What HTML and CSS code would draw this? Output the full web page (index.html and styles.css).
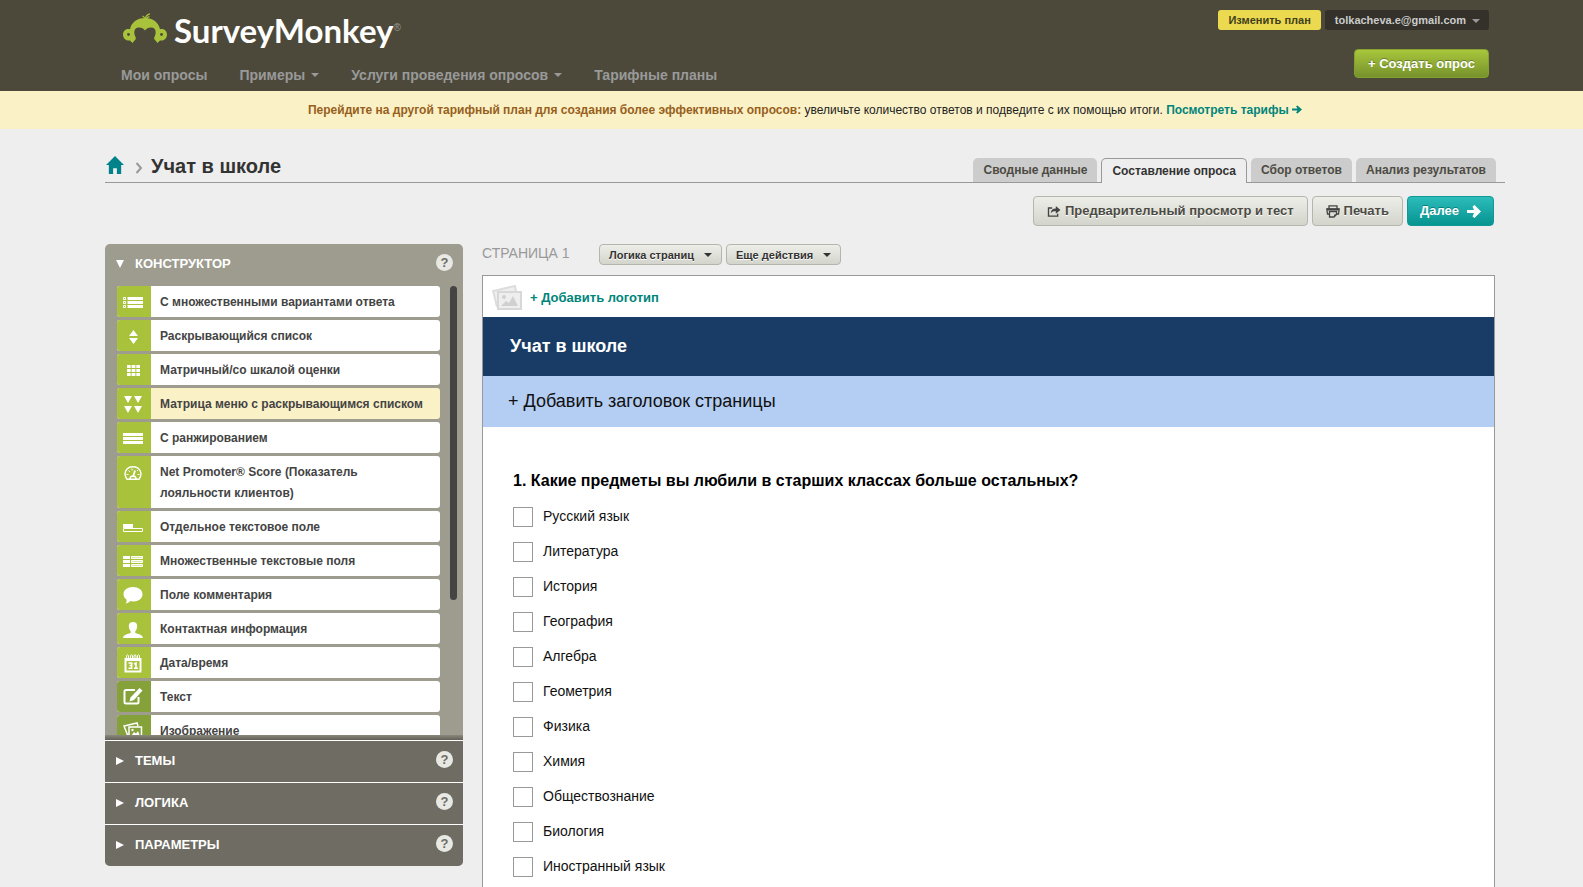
FILE: index.html
```html
<!DOCTYPE html>
<html lang="ru">
<head>
<meta charset="utf-8">
<title>Учат в школе</title>
<link rel="stylesheet" href="styles.css">
</head>
<body>
<header class="header">
  <div class="header-left">
    <a class="logo" href="#">
      <svg class="monkey" viewBox="0 0 44 31" width="44" height="31" aria-hidden="true">
        <path fill="#a8c23c" d="M22 5C14 5 8.500 9.500 7 16.200C3.500 15.500 0 17.500 0 21.500C0 25.500 3 28 7 27.500L9.500 30L11.500 27.500C12.800 26.500 13.200 25.500 12.500 24C10.300 19.500 11 15 15.500 14.500C18.500 14.300 20.500 15.500 22 17.500C23.500 15.500 25.500 14.300 28.500 14.500C33 15 33.700 19.500 31.500 24C30.800 25.500 31.200 26.500 32.500 27.500L34.500 30L37 27.500C41 28 44 25.500 44 21.500C44 17.500 40.500 15.500 37 16.200C35.500 9.500 30 5 22 5Z"/>
        <path fill="none" stroke="#a8c23c" stroke-width="1.200" d="M22 6C21.500 4.500 20.500 3.500 19.500 3M22.500 6C22.500 3.500 24 1.500 27 .8M23.500 6C24 4.500 25 3.800 26.500 3.700"/>
        <circle cx="5.500" cy="21.500" r="1.400" fill="#4c493b"/><circle cx="38.500" cy="21.500" r="1.400" fill="#4c493b"/>
      </svg>
      <span class="logo-text">SurveyMonkey</span><span class="reg">®</span>
    </a>
    <nav class="nav">
      <a href="#">Мои опросы</a>
      <a href="#">Примеры<i class="caret"></i></a>
      <a href="#">Услуги проведения опросов<i class="caret"></i></a>
      <a href="#">Тарифные планы</a>
    </nav>
  </div>
  <div class="header-right">
    <div class="account">
      <button class="plan">Изменить план</button>
      <button class="user">tolkacheva.e@gmail.com<i class="caret"></i></button>
    </div>
    <button class="create">+ Создать опрос</button>
  </div>
</header>
<div class="banner"><b>Перейдите на другой тарифный план для создания более эффективных опросов:</b> увеличьте количество ответов и подведите с их помощью итоги. <a href="#">Посмотреть тарифы
  <svg width="10" height="9" viewBox="0 0 11 9"><path fill="#00857b" d="M0 3.500H6L4.500 1L6 0L11 4.500L6 9L4.500 8L6 5.500H0Z"/></svg></a></div>

<div class="page">
  <div class="titlebar">
    <a class="home" href="#" aria-label="Главная"><svg width="18" height="18" viewBox="0 0 19 19"><path fill="#00828a" d="M9.500 0L19 9.500H16V19H11.500V13H7.500V19H3V9.500H0Z"/></svg></a>
    <svg class="chev" width="8" height="12" viewBox="0 0 8 12"><path fill="none" stroke="#999" stroke-width="2" d="M1.500 1L6 6L1.500 11"/></svg>
    <h1>Учат в школе</h1>
    <nav class="tabs">
      <a href="#">Сводные данные</a>
      <a class="active" href="#">Составление опроса</a>
      <a href="#">Сбор ответов</a>
      <a href="#">Анализ результатов</a>
    </nav>
  </div>
  <div class="actions">
    <button class="btn preview"><svg width="14" height="11" viewBox="0 0 14 12"><path fill="none" stroke="#444" stroke-width="1.500" d="M5 2.200H1V11H11V8.500"/><path fill="#444" d="M3.500 8C3.500 4.500 5.500 2.700 9 2.700V0L14 4.300L9 8.500V5.800C6.500 5.600 5 6 3.500 8Z"/></svg>Предварительный просмотр и тест</button>
    <button class="btn print"><svg width="14" height="13" viewBox="0 0 14 13"><path fill="none" stroke="#444" stroke-width="1.300" d="M3 3.500V.8H11V3.500M3 9H1.500L.8 4H13.200L12.500 9H11M3.500 6.500H10.500V9.500L8 12H3.500Z"/><path fill="#444" d="M1 3.500H13V5.500H1ZM8 9.500H10.500L8 12Z"/></svg>Печать</button>
    <button class="btn next">Далее<svg width="14" height="13" viewBox="0 0 14 13"><path fill="#fff" d="M0 5H7L5.500 1.500L7.500 0L14 6.500L7.500 13L5.500 11.500L7 8H0Z"/></svg></button>
  </div>

  <div class="columns">
    <aside class="sidebar">
      <div class="panel-head"><span class="tri down"></span><h2>КОНСТРУКТОР</h2><button class="help" aria-label="Справка">?</button></div>
      <div class="builder">
        <ul class="types">
          <li><span class="ic"><svg width="20" height="11" viewBox="0 0 20 11"><path fill="#fff" d="M4.500 0H20V3H4.500ZM4.500 4H20V7H4.500ZM4.500 8H20V11H4.500Z"/><path fill="none" stroke="#fff" d="M.5 .5H2.500V2.500H.5ZM.5 4.500H2.500V6.500H.5ZM.5 8.500H2.500V10.500H.5Z"/></svg></span><span>С множественными вариантами ответа</span></li>
          <li><span class="ic"><svg width="9" height="14" viewBox="0 0 9 14"><path fill="#fff" d="M4.500 0L9 6H0ZM0 8H9L4.500 14Z"/></svg></span><span>Раскрывающийся список</span></li>
          <li><span class="ic"><svg width="13" height="11" viewBox="0 0 13 11"><path fill="#fff" d="M0 0H3.700V3H0ZM4.600 0H8.400V3H4.600ZM9.300 0H13V3H9.300ZM0 4H3.700V7H0ZM4.600 4H8.400V7H4.600ZM9.300 4H13V7H9.300ZM0 8H3.700V11H0ZM4.600 8H8.400V11H4.600ZM9.300 8H13V11H9.300Z"/></svg></span><span>Матричный/со шкалой оценки</span></li>
          <li class="picked"><span class="ic"><svg width="18" height="17" viewBox="0 0 18 17"><path fill="#fff" d="M0 0H8L4 7ZM10 0H18L14 7ZM0 10H8L4 17ZM10 10H18L14 17Z"/></svg></span><span>Матрица меню с раскрывающимся списком</span></li>
          <li><span class="ic"><svg width="20" height="11" viewBox="0 0 20 11"><path fill="#fff" d="M0 0H20V3H0ZM0 4H20V7H0ZM0 8H20V11H0Z"/></svg></span><span>С ранжированием</span></li>
          <li><span class="ic"><svg width="18" height="14" viewBox="0 0 18 14"><path fill="none" stroke="#fff" stroke-width="1.400" d="M3 13.300C-1 8 1.500 .7 9 .7C16.500 .7 19 8 15 13.300ZM6 13C6 10.500 7.500 10 9 10C10.500 10 12 10.500 12 13"/><path stroke="#fff" stroke-width="1.800" d="M9 11L11 4.500"/><path stroke="#fff" d="M2.500 8.500H4.500M4.500 4.500L6 6M8 2.500V4.500M13.500 8.500H15.500M13 5L14 4"/></svg></span><span>Net Promoter® Score (Показатель лояльности клиентов)</span></li>
          <li><span class="ic"><svg width="20" height="8" viewBox="0 0 20 8"><path fill="#fff" d="M0 0H10V4H0Z"/><path fill="none" stroke="#fff" d="M.5 4.500H19.500V7.500H.5Z"/></svg></span><span>Отдельное текстовое поле</span></li>
          <li><span class="ic"><svg width="20" height="11" viewBox="0 0 20 11"><path fill="#fff" d="M0 0H7V3H0ZM0 4H7V7H0ZM0 8H7V11H0Z"/><path fill="#dce7b0" stroke="#fff" d="M8.500 .5H19.500V2.500H8.500ZM8.500 4.500H19.500V6.500H8.500ZM8.500 8.500H19.500V10.500H8.500Z"/></svg></span><span>Множественные текстовые поля</span></li>
          <li><span class="ic"><svg width="20" height="17" viewBox="0 0 20 17"><path fill="#fff" d="M10 0C15.500 0 19.500 3 19.500 7.300C19.500 11.500 15.500 14.500 10.500 14.500C9 14.500 8.300 14.400 7.300 14.100C6 15.800 4.300 16.500 2.500 16.600C3.500 15.500 3.800 14 3.500 12.500C1.700 11.200 .5 9.500 .5 7.300C.5 3 4.500 0 10 0Z"/></svg></span><span>Поле комментария</span></li>
          <li><span class="ic"><svg width="20" height="16" viewBox="0 0 20 16"><path fill="#fff" d="M10 0C13 0 14.500 2 14.200 4.500C14 7 13 8.500 12.300 9.300V11C14.500 12 19.500 12 20 16H0C.5 12 5.500 12 7.700 11V9.300C7 8.500 6 7 5.800 4.500C5.500 2 7 0 10 0Z"/></svg></span><span>Контактная информация</span></li>
          <li><span class="ic"><svg width="18" height="19" viewBox="0 0 18 19"><path fill="#fff" d="M.5 4H17.500V18.500H.5Z"/><path fill="none" stroke="#fff" d="M2.500 5V1.500Q3.500 0 4.500 1.500V4M6.500 5V1.500Q7.500 0 8.500 1.500V4M10 5V1.500Q11 0 12 1.500V4M13.500 5V1.500Q14.500 0 15.500 1.500V4"/><path fill="#a8c23c" d="M2.500 7H15.500V16.500H2.500Z"/><path fill="none" stroke="#fff" stroke-width="1.600" d="M4.500 9H7.700V14.200H4.500M5.500 11.500H7.700M10 10L12 9V14.500M10 14.300H14"/></svg></span><span>Дата/время</span></li>
          <li class="dark"><span class="ic"><svg width="20" height="17" viewBox="0 0 20 17"><path fill="none" stroke="#fff" stroke-width="2" d="M12 2H3Q1.500 2 1.500 3.500V14Q1.500 15.500 3 15.500H14Q15.500 15.500 15.500 14V9"/><path fill="#fff" d="M16.500 0L19.500 2.500L11 12L6.500 13.500L7.500 9.500Z"/></svg></span><span>Текст</span></li>
          <li class="dark"><span class="ic"><svg width="20" height="17" viewBox="0 0 20 17"><path fill="none" stroke="#fff" stroke-width="1.500" d="M5 14L1 4L14 1L15 4M6 5H18.500V16H6Z"/><path fill="#fff" d="M8 14L11 10L13 11.500L15 9L17 14Z"/><circle cx="9.500" cy="8" r="1.200" fill="#fff"/></svg></span><span>Изображение</span></li>
        </ul>
        <div class="scroll"></div>
      </div>
      <div class="shade"></div>
      <div class="panel-row"><span class="tri"></span><h2>ТЕМЫ</h2><button class="help" aria-label="Справка">?</button></div>
      <div class="panel-row"><span class="tri"></span><h2>ЛОГИКА</h2><button class="help" aria-label="Справка">?</button></div>
      <div class="panel-row"><span class="tri"></span><h2>ПАРАМЕТРЫ</h2><button class="help" aria-label="Справка">?</button></div>
    </aside>

    <main class="main">
      <div class="page-tools">
        <span class="page-no">СТРАНИЦА 1</span>
        <button class="btn small">Логика страниц<i class="caret"></i></button>
        <button class="btn small">Еще действия<i class="caret"></i></button>
      </div>
      <section class="survey">
        <a class="add-logo" href="#">
          <svg width="30" height="25" viewBox="0 0 30 25"><path fill="#eee" stroke="#ddd" stroke-width="2" d="M5 22L1 6L23 1L24 6"/><path fill="#eee" stroke="#d8d8d8" stroke-width="2" d="M6 7H29V24H6Z"/><path fill="#d0d0d0" d="M9 21L14 16L17 18L21 11L26 21Z"/><circle cx="12" cy="12" r="2" fill="#d0d0d0"/></svg>
          + Добавить логотип</a>
        <h2 class="survey-title">Учат в школе</h2>
        <button class="add-heading">+ Добавить заголовок страницы</button>
        <fieldset class="question">
          <legend>1. Какие предметы вы любили в старших классах больше остальных?</legend>
          <label><input type="checkbox">Русский язык</label>
          <label><input type="checkbox">Литература</label>
          <label><input type="checkbox">История</label>
          <label><input type="checkbox">География</label>
          <label><input type="checkbox">Алгебра</label>
          <label><input type="checkbox">Геометрия</label>
          <label><input type="checkbox">Физика</label>
          <label><input type="checkbox">Химия</label>
          <label><input type="checkbox">Обществознание</label>
          <label><input type="checkbox">Биология</label>
          <label><input type="checkbox">Иностранный язык</label>
        </fieldset>
      </section>
    </main>
  </div>
</div>
</body>
</html>
```
FILE: styles.css
```css
* { box-sizing: border-box; }
body { margin: 0; height: 100vh; overflow: hidden; display: flex; flex-direction: column; background: #eee; color: #333; font: 12px/20px "Liberation Sans", Arial, sans-serif; }
a { text-decoration: none; color: #00857b; }
h1, h2 { margin: 0; }
button { font: inherit; font-weight: bold; border: 0; padding: 0; cursor: pointer; white-space: nowrap; }
svg { flex: none; }
.caret { display: inline-block; border: 4px solid transparent; border-top-color: currentColor; border-bottom: 0; vertical-align: middle; margin-left: 6px; }

.header { flex: none; display: flex; justify-content: space-between; height: 91px; padding: 0 94px 0 121px; background: #4c493b; }
.logo { display: flex; height: 50px; margin-top: 13px; padding-left: 2px; color: #fff; }
.logo-text { margin-left: 7px; font: bold 33px/34px Lato, sans-serif; }
.reg { font-size: 10px; line-height: 30px; color: #999; }
.nav { display: flex; gap: 32px; margin-top: 2px; font-size: 14px; font-weight: bold; white-space: nowrap; }
.nav a { color: #999; }
.nav .caret { margin-bottom: 3px; }
.header-right { display: flex; flex-direction: column; align-items: flex-end; padding-top: 10px; }
.account { display: flex; gap: 4px; font-size: 11px; }
.plan { height: 20px; padding: 0 10px; border-radius: 3px; background: #ebd94f; color: #40401c; }
.user { height: 20px; padding: 0 9px 0 10px; border-radius: 3px; background: #333129; color: #ccc; }
.user .caret { color: #999; }
.create { height: 29px; margin-top: 19px; padding: 0 13px; border: 1px solid #84a02f; border-radius: 4px; background: linear-gradient(#a9c63c, #76922c); color: #fff; font-size: 13px; text-shadow: 0 -1px #687f29; }

.banner { flex: none; height: 38px; padding: 9px 0 9px 27px; background: #fbf1c7; text-align: center; color: #222; white-space: nowrap; }
.banner b { color: #96601c; }
.banner a { font-weight: bold; }

.page { flex: 1; min-height: 0; display: flex; flex-direction: column; padding: 24px 78px 0 105px; }
.titlebar { flex: none; display: flex; height: 30px; border-bottom: 1px solid #999; }
.home { padding: 3px 1px 0; }
.chev { margin: 9px 8px 0 10px; }
h1 { font-size: 20px; line-height: 26px; }
.tabs { display: flex; align-items: flex-end; gap: 4px; margin-left: auto; padding-right: 9px; font-weight: bold; }
.tabs a { height: 24px; padding: 2px 10px; border-radius: 5px 5px 0 0; background: #ccc; color: #4c4b43; }
.tabs .active { height: 25px; margin-bottom: -1px; border: 1px solid #999; border-bottom: 0; background: #eee; color: #333; }
.actions { flex: none; display: flex; justify-content: flex-end; gap: 4px; margin-top: 13px; padding-right: 11px; }
.btn { display: flex; align-items: center; justify-content: center; gap: 4px; height: 30px; padding: 0 13px; border: 1px solid #b5b5ae; border-radius: 4px; background: linear-gradient(#edeee8, #d3d4cb); color: #4c4b43; font-size: 13px; text-shadow: 0 1px #fff; }
.next { gap: 8px; padding: 0 12px; border-color: #109a96; background: linear-gradient(#2cbcba, #069490); color: #fff; text-shadow: 0 -1px #08807d; }

.columns { flex: 1; min-height: 0; display: flex; align-items: stretch; gap: 19px; margin-top: 18px; }
.sidebar { width: 358px; flex: none; align-self: flex-start; border-radius: 5px; overflow: hidden; background: #9e9b8f; color: #fff; }
.sidebar h2 { font-size: 13px; line-height: 20px; }
.panel-head, .panel-row { display: flex; align-items: center; padding: 0 10px 2px 11px; }
.panel-head { height: 42px; }
.panel-row { height: 42px; border-top: 1px solid #fff; background: #6f6d63; }
.tri { width: 8px; margin-right: 11px; border: 4px solid transparent; border-left: 8px solid #fff; border-right: 0; }
.tri.down { border: 4px solid transparent; border-top: 8px solid #fff; border-bottom: 0; }
.help { width: 17px; height: 17px; margin: 0 0 3px auto; border-radius: 50%; background: #e8e8e4; color: #6f6d63; font-size: 13px; line-height: 17px; }
.builder { display: flex; height: 449px; overflow: hidden; padding: 0 6px 0 12px; }
.types { flex: 1; margin: 0; padding: 0; list-style: none; }
.types li { display: flex; min-height: 31px; margin-bottom: 3px; border-radius: 3px; overflow: hidden; background: #fff; color: #444; font-weight: bold; line-height: 21px; }
.types li > span:last-child { padding: 6px 9px 4px; }
.types .ic { flex: none; display: flex; justify-content: center; align-items: center; width: 34px; padding: 2px 2px 0 0; background: #a8c23c; }
.types li:nth-child(6) .ic { align-items: flex-start; padding-top: 10px; }
.types .dark .ic { padding-top: 0; background: #84a13a; }
.types .picked { background: #fbf1c7; }
.scroll { width: 7px; height: 314px; margin-left: 10px; border-radius: 4px; background: #444; }
.shade { height: 5px; background: linear-gradient(#8b887d, #626056); }

.main { flex: 1; min-width: 0; margin-right: 10px; display: flex; flex-direction: column; }
.page-tools { flex: none; display: flex; gap: 4px; height: 31px; }
.page-no { width: 113px; color: #999; font-size: 14px; line-height: 18px; }
.small { height: 21px; padding: 0 9px; font-size: 11px; gap: 4px; color: #333; }
.small .caret { border-width: 4px; border-bottom: 0; }
.survey { flex: 1; min-height: 0; display: flex; flex-direction: column; border: 1px solid #999; border-bottom: 0; background: #fff; }
.add-logo { flex: none; display: flex; align-items: center; gap: 8px; height: 41px; padding: 2px 9px 0; font-size: 13px; font-weight: bold; }
.survey-title { flex: none; padding: 14px 27px; background: #193c66; color: #fff; font-size: 18px; line-height: 31px; }
.add-heading { flex: none; height: 51px; padding: 0 25px 2px; background: #b3cdf3; color: #111; font-size: 18px; font-weight: normal; text-align: left; }
.question { margin: 0; padding: 42px 30px 0; border: 0; color: #111; }
.question legend { float: left; width: 100%; padding: 0; margin-bottom: 11px; color: #000; font-size: 16px; font-weight: bold; line-height: 24px; }
.question label { clear: both; display: flex; gap: 10px; height: 35px; font-size: 14px; line-height: 24px; }
.question input { appearance: none; width: 20px; height: 20px; margin: 3px 0 0; border: 1px solid #999; background: #fff; }
```
